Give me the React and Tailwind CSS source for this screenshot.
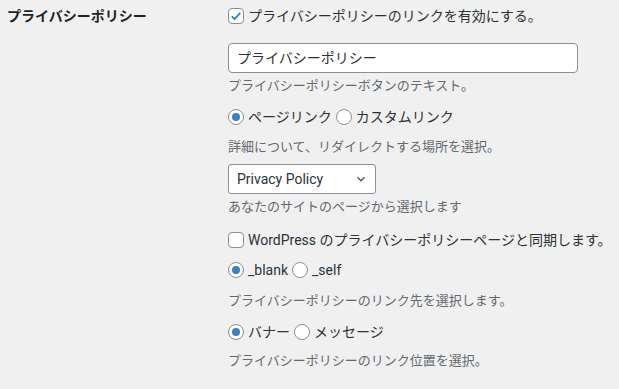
const font = { fontFamily: 'Roboto, "Noto Sans CJK JP", sans-serif' };

const Checkbox = ({ checked }) => (
    <span className="w-4 h-4 shrink-0 rounded-[4px] border border-[#8c8f94] bg-white flex items-center justify-center">
        {checked && (
            <svg width="14" height="14" viewBox="0 0 20 20">
                <path d="M4 10.5l4 4 8-9" fill="none" stroke="#3582c4" strokeWidth="2.6" />
            </svg>
        )}
    </span>
);

const Radio = ({ checked }) => (
    <span className="w-4 h-4 shrink-0 rounded-full border border-[#8c8f94] bg-white flex items-center justify-center">
        {checked && <span className="w-2 h-2 rounded-full bg-[#3582c4]" />}
    </span>
);

const RadioGroup = ({ options, className }) => (
    <div className={`h-5 flex items-center text-[14px] text-[#2c3338] ${className}`}>
        {options.map((opt, i) => (
            <label key={opt.label} className={`flex items-center gap-1 ${i > 0 ? 'ml-[4px]' : ''}`}>
                <Radio checked={opt.checked} />
                <span>{opt.label}</span>
            </label>
        ))}
    </div>
);

const Desc = ({ children, className }) => (
    <p className={`h-5 flex items-center text-[13px] text-[#646970] ${className}`}>{children}</p>
);

export default function App() {
    return (
        <div className="w-[619px] h-[389px] bg-[#f0f0f1] flex overflow-hidden" style={font}>
            <div className="w-[228px] shrink-0 pl-[7px] pt-[6px]">
                <div className="h-5 flex items-center text-[14px] font-bold text-[#1d2327]">プライバシーポリシー</div>
            </div>
            <div className="flex-1 pt-[6px]">
                <label className="h-5 flex items-center gap-1 text-[14px] text-[#2c3338]">
                    <Checkbox checked />
                    <span>プライバシーポリシーのリンクを有効にする。</span>
                </label>

                <div className="mt-[17px] w-[350px] h-[30px] rounded-[4px] border border-[#8c8f94] bg-white flex items-center px-2 text-[14px] text-[#2c3338]">
                    プライバシーポリシー
                </div>
                <Desc className="mt-[3px]">プライバシーポリシーボタンのテキスト。</Desc>

                <RadioGroup
                    className="mt-[11px]"
                    options={[{ label: 'ページリンク', checked: true }, { label: 'カスタムリンク' }]}
                />
                <Desc className="mt-[10px]">詳細について、リダイレクトする場所を選択。</Desc>

                <div className="mt-[7px] w-[148px] h-[30px] rounded-[3px] border border-[#8c8f94] bg-white flex items-center justify-between pl-2 pr-[7px] text-[14px] text-[#2c3338]">
                    <span>Privacy Policy</span>
                    <svg width="14" height="14" viewBox="0 0 20 20">
                        <path d="M5 7.5l5 5 5-5" fill="none" stroke="#50575e" strokeWidth="2" />
                    </svg>
                </div>
                <Desc className="mt-[3px]">あなたのサイトのページから選択します</Desc>

                <label className="mt-[13px] h-5 flex items-center gap-1 text-[14px] text-[#2c3338]">
                    <Checkbox />
                    <span>WordPress のプライバシーポリシーページと同期します。</span>
                </label>

                <RadioGroup
                    className="mt-[10px]"
                    options={[{ label: '_blank', checked: true }, { label: '_self' }]}
                />
                <Desc className="mt-[11px]">プライバシーポリシーのリンク先を選択します。</Desc>

                <RadioGroup
                    className="mt-[11px]"
                    options={[{ label: 'バナー', checked: true }, { label: 'メッセージ' }]}
                />
                <Desc className="mt-[9px]">プライバシーポリシーのリンク位置を選択。</Desc>
            </div>
        </div>
    );
}
